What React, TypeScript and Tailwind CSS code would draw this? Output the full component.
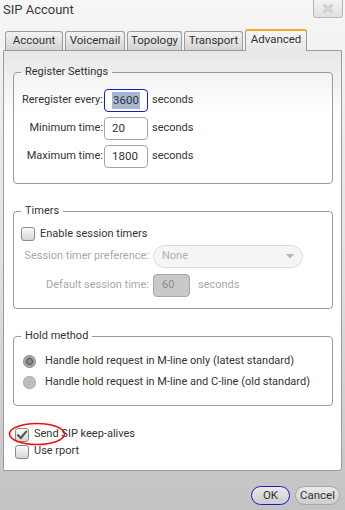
import React from "react";

const font = { fontFamily: 'Roboto, "Noto Sans", sans-serif' };

function Checkbox({ checked }: { checked?: boolean }) {
  return (
    <span className="relative inline-flex h-[14px] w-[14px] shrink-0 items-center justify-center rounded-[3px] border border-[#8a8a8a] bg-gradient-to-b from-[#fbfbfb] to-[#d6d6d6]">
      {checked && (
        <svg width="12" height="12" viewBox="0 0 12 12">
          <path d="M2 6.2 L4.8 9 L10.2 2.6" fill="none" stroke="#555" strokeWidth="2.2" strokeLinecap="round" strokeLinejoin="round" />
        </svg>
      )}
    </span>
  );
}

function Tab({ label, w, active }: { label: string; w: string; active?: boolean }) {
  if (active) {
    return (
      <div className={`${w} relative z-10 -mb-px flex h-[22px] items-center justify-center rounded-t-[3px] border border-b-0 border-[#9c9c9c] border-t-2 border-t-[#f5a623] bg-gradient-to-b from-[#f6f6f6] to-[#e7e7e7] pb-[3px] text-[11.5px] text-[#333]`}>
        {label}
      </div>
    );
  }
  return (
    <div className={`${w} flex h-[19px] items-center justify-center rounded-t-[3px] border border-b-0 border-[#9c9c9c] bg-gradient-to-b from-[#f3f3f3] to-[#d3d3d3] text-[11.5px] text-[#333]`}>
      {label}
    </div>
  );
}

function TextInput({ value, focused }: { value: string; focused?: boolean }) {
  return (
    <div
      className={`flex h-[23px] w-[44px] items-center rounded-[4px] border bg-white pl-[7px] text-[11.5px] text-[#333] ${
        focused ? "border-[#1a1ad0]" : "border-[#a5a5a5]"
      }`}
    >
      {focused ? <span className="bg-[#a8b6d6] px-px">{value}</span> : value}
    </div>
  );
}

export default function App() {
  return (
    <div
      style={font}
      className="flex h-[510px] w-[345px] flex-col bg-gradient-to-b from-[#f6f6f6] via-[#e2e2e2] to-[#c3c3c3] text-[#333]"
    >
      {/* Title bar */}
      <div className="flex h-[29px] items-start justify-between">
        <div className="pl-[3px] pt-px text-[13px] leading-[18px] text-[#3a3a3a]">SIP Account</div>
        <div className="mr-[2px] flex h-[18px] w-[30px] items-center justify-center rounded-b-[3px] border border-t-0 border-[#b8b8b8] bg-gradient-to-b from-[#f4f4f4] to-[#e0e0e0]">
          <svg width="12" height="9" viewBox="0 0 12 9">
            <path d="M1.5 0.5 L10.5 8.5 M10.5 0.5 L1.5 8.5" stroke="#c2c2c2" strokeWidth="2.4" fill="none" />
            <path d="M1.5 0.5 L10.5 8.5 M10.5 0.5 L1.5 8.5" stroke="#ececec" strokeWidth="0.8" fill="none" />
          </svg>
        </div>
      </div>

      {/* Tabs */}
      <div className="flex items-end gap-[2px] pl-[5px]">
        <Tab label="Account" w="w-[58px]" />
        <Tab label="Voicemail" w="w-[60px]" />
        <Tab label="Topology" w="w-[55px]" />
        <Tab label="Transport" w="w-[59px]" />
        <Tab label="Advanced" w="w-[62px]" active />
      </div>

      {/* Panel */}
      <div className="relative ml-[3px] mr-[3px] flex h-[421px] flex-col rounded-br-[3px] border border-[#9c9c9c] bg-[linear-gradient(to_bottom,#e7e7e7_0px,#ffffff_70px,#ffffff_100%)] pl-[9px] pr-[8px] pt-[14px] text-[11px]">
        {/* Register Settings */}
        <fieldset className="rounded-[4px] border border-[#9a9a9a] bg-[linear-gradient(to_bottom,#f3f3f3,#ffffff_40px)] pb-[15px] pl-[7px] pr-2 pt-[10px]">
          <legend className="px-[4px] leading-[14px] text-[#333]">Register Settings</legend>
          <div className="flex flex-col gap-[5px]">
            {[
              ["Reregister every:", "3600", true],
              ["Minimum time:", "20", false],
              ["Maximum time:", "1800", false],
            ].map(([label, v, f]) => (
              <div key={label as string} className="flex h-[23px] items-center">
                <div className="w-[82px] whitespace-nowrap text-right">{label as string}</div>
                <div className="ml-px">
                  <TextInput value={v as string} focused={f as boolean} />
                </div>
                <div className="ml-[4px]">seconds</div>
              </div>
            ))}
          </div>
        </fieldset>

        {/* Timers */}
        <fieldset className="mt-[20px] rounded-[4px] border border-[#9a9a9a] pb-[11px] pl-[7px] pr-2 pt-[8px]">
          <legend className="px-[4px] leading-[14px] text-[#333]">Timers</legend>
          <div className="flex h-[16px] items-center gap-[5px]">
            <Checkbox />
            <span>Enable session timers</span>
          </div>
          <div className="mt-[3px] flex h-[23px] items-center">
            <div className="w-[128px] whitespace-nowrap text-right text-[#a9a9a9]">Session timer preference:</div>
            <div className="ml-[4px] flex h-[23px] w-[150px] items-center justify-between rounded-full border border-[#dcdcdc] bg-[#f5f5f5] pl-[8px] pr-[8px] text-[#b0b0b0]">
              <span>None</span>
              <svg width="8" height="5" viewBox="0 0 8 5">
                <path d="M0 0 L8 0 L4 4.5 Z" fill="#b5b5b5" />
              </svg>
            </div>
          </div>
          <div className="mt-[6px] flex h-[23px] items-center">
            <div className="w-[128px] whitespace-nowrap text-right text-[#a9a9a9]">Default session time:</div>
            <div className="ml-[4px] flex h-[23px] w-[37px] items-center rounded-[4px] border border-[#a8a8a8] bg-[#c9c9c9] pl-[8px] text-[#8c8c8c]">
              60
            </div>
            <div className="ml-[8px] text-[#a9a9a9]">seconds</div>
          </div>
        </fieldset>

        {/* Hold method */}
        <fieldset className="mt-[20px] rounded-[4px] border border-[#9a9a9a] pb-[13px] pl-[9px] pr-2 pt-[8px]">
          <legend className="ml-[-2px] px-[4px] leading-[14px] text-[#333]">Hold method</legend>
          <div className="flex h-[20px] items-center gap-[9px] whitespace-nowrap">
            <span className="flex h-[13px] w-[13px] items-center justify-center rounded-full bg-[radial-gradient(circle,#8c8c8c_30%,#b9b9b9_70%)] shadow-[inset_0_0_0_1px_#9a9a9a]">
              <span className="h-[7px] w-[7px] rounded-full border border-[#555] bg-[#8a8a8a]" />
            </span>
            <span>Handle hold request in M-line only (latest standard)</span>
          </div>
          <div className="mt-px flex h-[20px] items-center gap-[9px] whitespace-nowrap">
            <span className="h-[13px] w-[13px] rounded-full bg-[#bdbdbd] shadow-[inset_0_0_0_1px_#b0b0b0]" />
            <span>Handle hold request in M-line and C-line (old standard)</span>
          </div>
        </fieldset>

        {/* Checkboxes */}
        <div className="relative ml-[2px] mt-[20px] flex flex-col">
          <div className="flex h-[17px] items-center gap-[5px]">
            <Checkbox checked />
            <span>Send SIP keep-alives</span>
          </div>
          <div className="flex h-[17px] items-center gap-[5px]">
            <Checkbox />
            <span>Use rport</span>
          </div>
          <svg className="pointer-events-none absolute left-[-7px] top-[-4px]" width="58" height="24" viewBox="0 0 58 24">
            <ellipse cx="29" cy="12" rx="27.5" ry="10.5" fill="none" stroke="#ee1111" strokeWidth="1.6" />
          </svg>
        </div>
      </div>

      {/* Buttons */}
      <div className="mt-[15px] flex justify-end gap-[5px] pr-[5px]">
        <button className="h-[19px] w-[39px] rounded-full border border-[#1a1ad0] bg-gradient-to-b from-[#e9e9e9] to-[#cdcdcd] text-[11.5px] leading-none text-[#333]">
          OK
        </button>
        <button className="h-[19px] w-[45px] rounded-full border border-[#a8a8a8] bg-gradient-to-b from-[#e9e9e9] to-[#cdcdcd] text-[11.5px] leading-none text-[#333]">
          Cancel
        </button>
      </div>
    </div>
  );
}
